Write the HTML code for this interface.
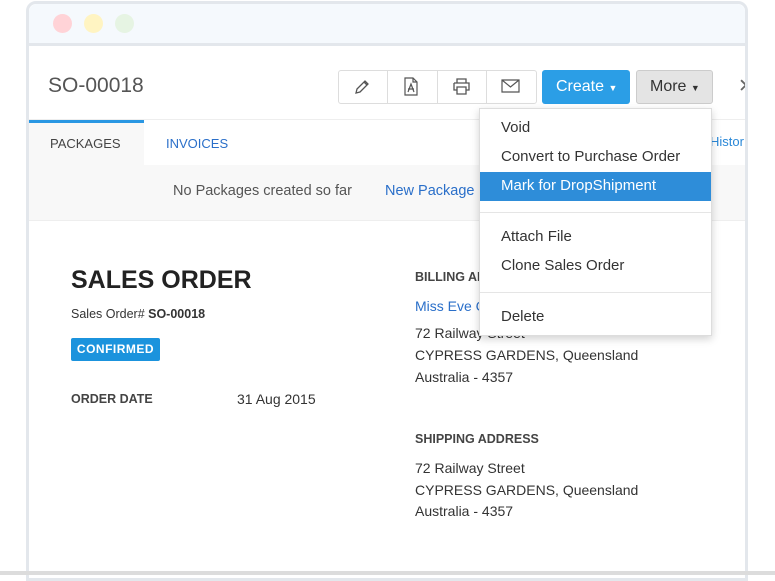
<!DOCTYPE html>
<html><head><meta charset="utf-8"><style>
*{margin:0;padding:0;box-sizing:border-box}
body{width:775px;height:575px;background:#fff;font-family:"Liberation Sans",sans-serif;position:relative;overflow:hidden;color:#333}
.a{position:absolute;white-space:nowrap}
.frame{position:absolute;left:26px;top:1px;width:722px;height:580px;border:3px solid #e3e7ec;border-radius:10px 10px 0 0;background:#fff}
.tb{position:absolute;left:29px;top:4px;width:716px;height:42px;background:#f5f9fd;border-radius:8px 8px 0 0;border-bottom:3px solid #e3e7ec}
.dot{position:absolute;top:14px;width:19px;height:19px;border-radius:50%}
.btn{position:absolute;top:70px;height:34px;border:1px solid #ddd;background:#fff}
.dd{position:absolute;left:479px;top:108px;width:233px;height:228px;background:#fff;border:1px solid #ddd;box-shadow:0 3px 8px rgba(0,0,0,.18)}
.dd div{position:absolute;left:21px;font-size:15px;color:#333}
.lab{font-size:12.5px;font-weight:bold;color:#444}
.addr{font-size:14px;color:#333}
</style></head><body>
<div class="frame"></div>
<div class="tb"></div>
<div class="dot" style="left:53px;background:#ffd3d7"></div>
<div class="dot" style="left:84px;background:#fff4c2"></div>
<div class="dot" style="left:115px;background:#e6f4e3"></div>
<div class="a" style="left:48px;top:74px;font-size:21px;color:#555">SO-00018</div>
<div class="btn" style="left:338px;width:199px;border-radius:3px"></div>
<div class="a" style="left:387px;top:70px;width:1px;height:34px;background:#ddd"></div>
<div class="a" style="left:437px;top:70px;width:1px;height:34px;background:#ddd"></div>
<div class="a" style="left:486px;top:70px;width:1px;height:34px;background:#ddd"></div>
<svg class="a" style="left:353px;top:78px" width="18" height="18" viewBox="0 0 18 18" fill="none" stroke="#555" stroke-width="1.3"><path d="M3 15l1-4 8-8 3 3-8 8z M11 4l3 3"/></svg>
<svg class="a" style="left:403px;top:77px" width="16" height="19" viewBox="0 0 16 19" fill="none" stroke="#555" stroke-width="1.2"><path d="M2 1h8l4 4v13H2z M10 1v4h4 M5 15l3-8 3 8 M5 12h6"/></svg>
<svg class="a" style="left:452px;top:77px" width="19" height="18" viewBox="0 0 19 18" fill="none" stroke="#555" stroke-width="1.3"><path d="M5 6V2h9v4 M2 6h15v7h-3 M5 13H2V6 M5 10h9v7H5z"/></svg>
<svg class="a" style="left:501px;top:79px" width="19" height="14" viewBox="0 0 19 14" fill="none" stroke="#555" stroke-width="1.2"><path d="M1 1h17v12H1z M1 1l8.5 7L18 1"/></svg>
<div class="a" style="left:542px;top:70px;width:88px;height:34px;background:#2b9ee6;border-radius:3px;color:#fff;font-size:16px;line-height:34px;padding-left:14px">Create <span style="font-size:9px">&#9660;</span></div>
<div class="a" style="left:636px;top:70px;width:77px;height:34px;background:#e4e4e4;border:1px solid #ccc;border-radius:3px;color:#333;font-size:16px;line-height:32px;padding-left:13px">More <span style="font-size:9px">&#9660;</span></div>
<div class="a" style="left:734px;top:70px;width:11px;height:34px;overflow:hidden"><div class="a" style="left:4px;top:5px;font-size:19px;color:#666">&#x2715;</div></div>
<div class="a" style="left:29px;top:119px;width:716px;height:1px;background:#eee"></div>
<div class="a" style="left:29px;top:120px;width:115px;height:45px;background:#f8f8f8;border-top:3px solid #2a97e3"></div>
<div class="a" style="left:50px;top:136px;font-size:13px;color:#444">PACKAGES</div>
<div class="a" style="left:166px;top:136px;font-size:13px;color:#2a6fc9">INVOICES</div>
<div class="a" style="left:710px;top:134px;font-size:13px;color:#2a88d8">Histor</div>
<div class="a" style="left:29px;top:165px;width:716px;height:56px;background:#f8f8f8;border-bottom:1px solid #eee"></div>
<div class="a" style="left:173px;top:183px;font-size:14.5px;color:#555">No Packages created so far</div>
<div class="a" style="left:385px;top:183px;font-size:14.5px;color:#2a6fc9">New Package</div>
<div class="a" style="left:71px;top:266px;font-size:25px;font-weight:bold;color:#222">SALES ORDER</div>
<div class="a" style="left:71px;top:307px;font-size:12.5px;color:#333">Sales Order# <b>SO-00018</b></div>
<div class="a" style="left:71px;top:338px;width:89px;height:23px;background:#1b93dd;border-radius:2px;color:#fff;font-size:12px;font-weight:bold;line-height:23px;text-align:center;letter-spacing:.5px">CONFIRMED</div>
<div class="a lab" style="left:71px;top:392px">ORDER DATE</div>
<div class="a addr" style="left:237px;top:391px">31 Aug 2015</div>
<div class="a lab" style="left:415px;top:270px">BILLING ADDRESS</div>
<div class="a" style="left:415px;top:298px;font-size:14px;color:#2a6fc9">Miss Eve Cooper</div>
<div class="a addr" style="left:415px;top:325px">72 Railway Street</div>
<div class="a addr" style="left:415px;top:347px">CYPRESS GARDENS, Queensland</div>
<div class="a addr" style="left:415px;top:369px">Australia - 4357</div>
<div class="a lab" style="left:415px;top:432px">SHIPPING ADDRESS</div>
<div class="a addr" style="left:415px;top:460px">72 Railway Street</div>
<div class="a addr" style="left:415px;top:482px">CYPRESS GARDENS, Queensland</div>
<div class="a addr" style="left:415px;top:503px">Australia - 4357</div>
<div class="dd">
<div style="top:10px">Void</div>
<div style="top:39px">Convert to Purchase Order</div>
<div style="left:0;top:63px;width:231px;height:29px;background:#2e8dd9"></div>
<div style="top:68px;color:#fff">Mark for DropShipment</div>
<div style="left:0;top:103px;width:231px;height:1px;background:#e5e5e5"></div>
<div style="top:119px">Attach File</div>
<div style="top:148px">Clone Sales Order</div>
<div style="left:0;top:183px;width:231px;height:1px;background:#e5e5e5"></div>
<div style="top:199px">Delete</div>
</div>
<div class="a" style="left:0;top:571px;width:775px;height:4px;background:#dcdcdc"></div>
</body></html>
